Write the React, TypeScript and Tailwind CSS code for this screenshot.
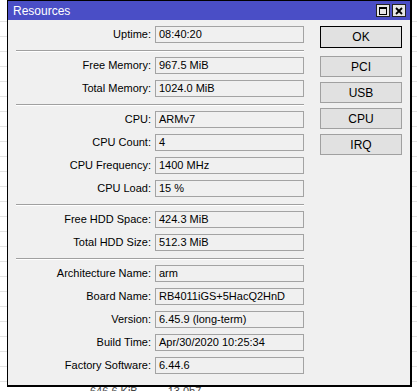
const rows: { label: string; value: string }[][] = [
  [{ label: "Uptime:", value: "08:40:20" }],
  [
    { label: "Free Memory:", value: "967.5 MiB" },
    { label: "Total Memory:", value: "1024.0 MiB" },
  ],
  [
    { label: "CPU:", value: "ARMv7" },
    { label: "CPU Count:", value: "4" },
    { label: "CPU Frequency:", value: "1400 MHz" },
    { label: "CPU Load:", value: "15 %" },
  ],
  [
    { label: "Free HDD Space:", value: "424.3 MiB" },
    { label: "Total HDD Size:", value: "512.3 MiB" },
  ],
  [
    { label: "Architecture Name:", value: "arm" },
    { label: "Board Name:", value: "RB4011iGS+5HacQ2HnD" },
    { label: "Version:", value: "6.45.9 (long-term)" },
    { label: "Build Time:", value: "Apr/30/2020 10:25:34" },
    { label: "Factory Software:", value: "6.44.6" },
  ],
];

const buttons = ["PCI", "USB", "CPU", "IRQ"];

const Field = ({ label, value }: { label: string; value: string }) => (
  <div className="flex items-center h-[17px]">
    <div className="w-[144px] text-right pr-[1px]">{label}</div>
    <div className="ml-[3px] w-[149px] h-[17px] border border-[#a3a3a3] bg-[#f0f0f0] pl-[3px] leading-[15px]">
      {value}
    </div>
  </div>
);

const App = () => {
  return (
    <div
      className="relative w-[417px] h-[391px] overflow-hidden bg-white text-[11px] text-black"
      style={{ fontFamily: '"Liberation Sans", Arial, sans-serif' }}
    >
      {/* table behind the window */}
      <div className="pt-[7px]">
        {Array.from({ length: 25 }).map((_, i) => (
          <div key={i} className="h-[15px] border-b border-[#e3e3e3]" />
        ))}
        <div className="flex h-[15px] text-[#444]">
          <span className="ml-[90px] mt-[1px]">646.6 KiB</span>
          <span className="ml-[30px] mt-[1px]">13.0b7</span>
        </div>
      </div>

      {/* Resources window */}
      <div className="absolute left-[7px] top-0 w-[405px] h-[387px] border-l border-t border-r-2 border-b-2 border-black bg-[#f0f0f0] flex flex-col">
        <div className="h-[19px] bg-[#4a4ec6] flex items-center justify-between">
          <span className="pl-[5px] text-white text-[12px]">Resources</span>
          <div className="flex gap-[2px] pr-[4px]">
            <div className="w-[14px] h-[13px] border border-[#222] bg-[#e6e6e6] flex items-center justify-center">
              <div className="w-[8px] h-[8px] border border-black border-t-2" />
            </div>
            <div className="w-[14px] h-[13px] border border-[#222] bg-[#e6e6e6] flex items-center justify-center">
              <svg width="8" height="8" viewBox="0 0 8 8">
                <path d="M1 1L7 7M7 1L1 7" stroke="black" strokeWidth="1.8" />
              </svg>
            </div>
          </div>
        </div>

        <div className="flex pt-[6px]">
          <div className="flex flex-col">
            {rows.map((group, gi) => (
              <div key={gi}>
                {gi > 0 && (
                  <div className="pt-[7px] pb-[5px]">
                    <div className="ml-[8px] w-[288px] h-[2px] border-t border-[#a0a0a0] border-b border-b-white" />
                  </div>
                )}
                <div className="flex flex-col gap-[6px]">
                  {group.map((r) => (
                    <Field key={r.label} {...r} />
                  ))}
                </div>
              </div>
            ))}
          </div>

          <div className="ml-[16px] flex flex-col">
            <button className="w-[82px] h-[22px] mb-[8px] border border-black bg-[#e1e1e1] text-[12px]">
              OK
            </button>
            <div className="flex flex-col gap-[5px]">
              {buttons.map((b) => (
                <button
                  key={b}
                  className="w-[82px] h-[21px] border border-[#a0a0a0] bg-[#e1e1e1] text-[12px]"
                >
                  {b}
                </button>
              ))}
            </div>
          </div>
        </div>
      </div>
    </div>
  );
};

export default App;
